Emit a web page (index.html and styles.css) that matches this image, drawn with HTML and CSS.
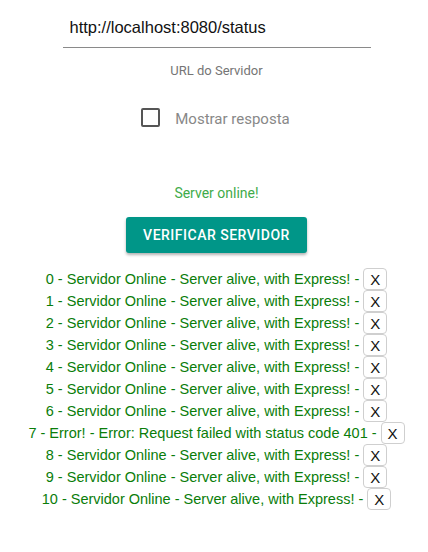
FILE: index.html
```html
<!DOCTYPE html>
<html>
<head>
<meta charset="utf-8">
<link rel="stylesheet" href="styles.css">
</head>
<body>
<div class="app">
  <div class="field">
    <div class="input">http://localhost:8080/status</div>
    <div class="label">URL do Servidor</div>
  </div>
  <label class="check">
    <span class="box"></span>
    <span class="check-text">Mostrar resposta</span>
  </label>
  <div class="status">Server online!</div>
  <button class="verify">VERIFICAR SERVIDOR</button>
  <ul class="log">
    <li><span>0 - Servidor Online - Server alive, with Express! -</span><button class="x">X</button></li>
    <li><span>1 - Servidor Online - Server alive, with Express! -</span><button class="x">X</button></li>
    <li><span>2 - Servidor Online - Server alive, with Express! -</span><button class="x">X</button></li>
    <li><span>3 - Servidor Online - Server alive, with Express! -</span><button class="x">X</button></li>
    <li><span>4 - Servidor Online - Server alive, with Express! -</span><button class="x">X</button></li>
    <li><span>5 - Servidor Online - Server alive, with Express! -</span><button class="x">X</button></li>
    <li><span>6 - Servidor Online - Server alive, with Express! -</span><button class="x">X</button></li>
    <li><span>7 - Error! - Error: Request failed with status code 401 -</span><button class="x">X</button></li>
    <li><span>8 - Servidor Online - Server alive, with Express! -</span><button class="x">X</button></li>
    <li><span>9 - Servidor Online - Server alive, with Express! -</span><button class="x">X</button></li>
    <li><span>10 - Servidor Online - Server alive, with Express! -</span><button class="x">X</button></li>
  </ul>
</div>
</body>
</html>
```

FILE: styles.css
```css
html, body {
  margin: 0;
  padding: 0;
  background: #fff;
}
.app {
  display: flex;
  flex-direction: column;
  align-items: center;
  padding-left: 5px;
  font-family: Roboto, "Liberation Sans", sans-serif;
}
.field {
  width: 308px;
  display: flex;
  flex-direction: column;
  align-items: center;
  padding-top: 15px;
}
.input {
  align-self: stretch;
  box-sizing: border-box;
  padding-left: 7px;
  padding-top: 3px;
  height: 33px;
  font-size: 16.5px;
  color: #111;
  border-bottom: 1px solid #8a8a8a;
  font-family: "Liberation Sans", sans-serif;
}
.label {
  margin-top: 15px;
  font-size: 13px;
  color: #757575;
}
.check {
  margin-top: 32px;
  display: flex;
  align-items: center;
  gap: 15px;
  margin-right: 2px;
}
.box {
  width: 15px;
  height: 15px;
  border: 2px solid #555;
  border-radius: 2px;
  margin-top: -4px;
}
.check-text {
  font-size: 15px;
  color: #888;
}
.status {
  margin-top: 57px;
  font-size: 14px;
  color: #3fab4a;
}
.verify {
  margin-top: 16px;
  width: 181px;
  height: 36px;
  border: none;
  border-radius: 3px;
  background: #009688;
  color: #fff;
  font-family: Roboto, sans-serif;
  font-size: 14px;
  font-weight: 500;
  letter-spacing: 0.5px;
  box-shadow: 0 2px 3px rgba(0,0,0,0.3);
}
.log {
  list-style: none;
  margin: 15px 0 0;
  padding: 0;
  font-family: "Liberation Sans", sans-serif;
  font-size: 14.5px;
  color: #0a7d0a;
}
.log li {
  height: 22px;
  display: flex;
  justify-content: center;
  align-items: center;
  gap: 4px;
}
.x {
  font-family: "Liberation Sans", sans-serif;
  font-size: 15px;
  color: #111;
  background: #fff;
  border: 1px solid #cfcfcf;
  border-radius: 4px;
  width: 24px;
  height: 22px;
  padding: 0;
}
```
